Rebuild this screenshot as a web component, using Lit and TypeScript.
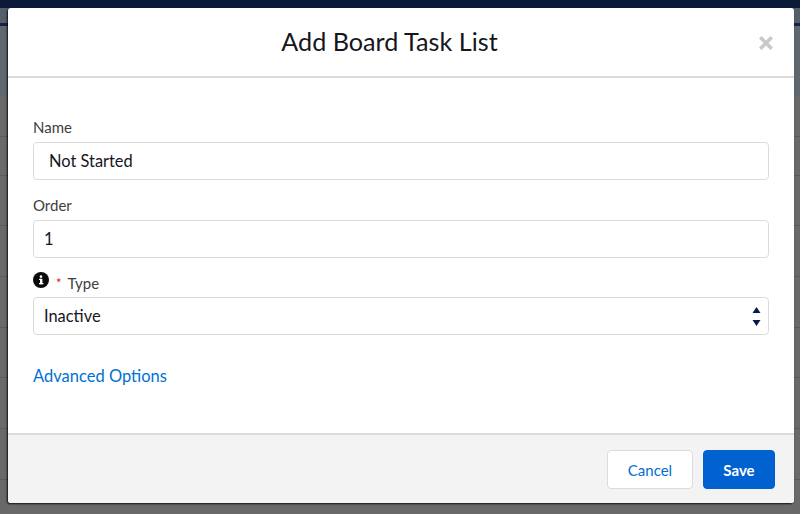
import { LitElement, html, css } from "lit";
import { customElement } from "lit/decorators.js";

const ROWS = [
  { h: 70, c: "strip" },
  { h: 41, c: "row" },
  { h: 39, c: "row" },
  { h: 50, c: "row" },
  { h: 51, c: "row" },
  { h: 51, c: "row" },
  { h: 50, c: "row" },
  { h: 51, c: "row" },
  { h: 51, c: "row" },
];

@customElement("app-root")
export class AppRoot extends LitElement {
  static styles = css`
    :host { display: block; width: 800px; height: 514px; overflow: hidden; font-family: Lato, "Open Sans", sans-serif; }
    .page { width: 800px; height: 514px; background: #696969; position: relative; display: flex; flex-direction: column; }
    .topbar { height: 8px; flex: none; background: #0a1a38; }
    .sub { height: 15px; flex: none; background: #53606b; }
    .subline { height: 3px; flex: none; background: #14233f; }
    .strip { background: #5e686e; box-sizing: border-box; flex: none; }
    .row { border-bottom: 1px solid #5a5a5a; box-sizing: border-box; flex: none; }
    .modal { position: absolute; left: 8px; top: 8px; width: 786px; height: 495px; background: #fff; border-radius: 3px; display: flex; flex-direction: column; box-shadow: -1px 1px 2px rgba(0,0,0,.85); overflow: hidden; }
    header { height: 70px; flex: none; box-sizing: border-box; border-bottom: 2px solid #dddbda; display: flex; align-items: center; justify-content: center; position: relative; padding: 0 23px 2px 0; }
    h1 { margin: 0; font-size: 25.2px; font-weight: 400; color: #16161d; }
    .close { position: absolute; right: 21px; top: 28px; width: 14px; height: 14px; }
    main { flex: 1; padding: 39px 25px 0; display: flex; flex-direction: column; }
    label { display: flex; align-items: center; font-size: 15px; color: #3e3e3c; height: 20px; box-sizing: border-box; }
    label.type-label { padding-top: 2px; }
    .field { height: 38px; box-sizing: border-box; border: 1px solid #dddbda; border-radius: 4px; margin-bottom: 15px; margin-top: 5px; padding-bottom: 2px; display: flex; align-items: center; font-size: 16.4px; color: #16161d; background: #fff; position: relative; }
    .field.name { padding-left: 15px; }
    .field.order, .field.type { padding-left: 10px; }
    .field.order { margin-bottom: 14px; }
    .arrows { position: absolute; right: 7px; top: 8px; width: 9px; height: 24px; }
    .info { width: 16px; height: 16px; margin-right: 7px; position: relative; top: -3px; }
    .req { color: #e01010; margin-right: 6px; font-size: 13px; }
    a { color: #0070d2; font-size: 16.5px; margin-top: 16px; }
    footer { height: 70px; flex: none; box-sizing: border-box; background: #f3f3f3; border-top: 2px solid #dddbda; display: flex; justify-content: flex-end; align-items: flex-start; gap: 10px; padding: 15px 19px 0; }
    button { height: 39px; font: 700 15px Lato, sans-serif; border-radius: 4px; box-sizing: border-box; }
    .cancel { width: 86px; background: #fff; border: 1px solid #dddbda; color: #0070d2; font-weight: 400; }
    .save { width: 72px; background: #0062d1; border: 1px solid #0062d1; color: #fff; }
  `;
  render() {
    return html`<div class="page">
      <div class="topbar"></div>
      <div class="sub"></div>
      <div class="subline"></div>
      ${ROWS.map((r) => html`<div class=${r.c} style="height:${r.h}px"></div>`)}
      <div class="modal">
        <header>
          <h1>Add Board Task List</h1>
          <svg class="close" viewBox="0 0 14 14"><path d="M2.5 2.5l9 9M11.5 2.5l-9 9" stroke="#c9c9c9" stroke-width="3.6" stroke-linecap="square"/></svg>
        </header>
        <main>
          <label>Name</label>
          <div class="field name">Not Started</div>
          <label>Order</label>
          <div class="field order">1</div>
          <label class="type-label">
            <svg class="info" viewBox="0 0 16 16"><circle cx="8" cy="8" r="8" fill="#0a0a0a"/><rect x="7" y="6.8" width="2.4" height="5.4" fill="#fff"/><rect x="6" y="11" width="4.4" height="1.3" fill="#fff"/><rect x="6" y="6.8" width="2" height="1.2" fill="#fff"/><circle cx="8" cy="4.6" r="1.3" fill="#fff"/></svg>
            <span class="req">*</span>Type
          </label>
          <div class="field type">Inactive
            <svg class="arrows" viewBox="0 0 9 24"><path d="M4.5 1L8.5 7H.5zM.5 14H8.5L4.5 20z" fill="#0a1a48"/></svg>
          </div>
          <a>Advanced Options</a>
        </main>
        <footer>
          <button class="cancel">Cancel</button>
          <button class="save">Save</button>
        </footer>
      </div>
    </div>`;
  }
}
